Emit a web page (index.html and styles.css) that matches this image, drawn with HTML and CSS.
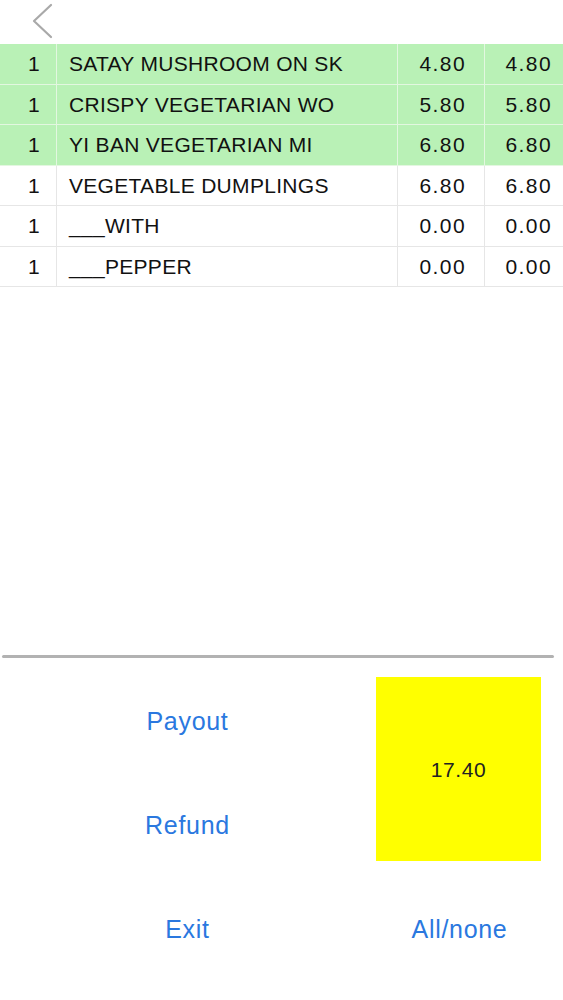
FILE: index.html
```html
<!DOCTYPE html>
<html>
<head>
<meta charset="utf-8">
<link rel="stylesheet" href="styles.css">
</head>
<body>
<div class="page">
  <div class="nav">
    <svg class="back" width="30" height="40" viewBox="0 0 30 40"><path d="M22 5 L5 21 L22 37" fill="none" stroke="#a9a9a9" stroke-width="2.2" stroke-linecap="round" stroke-linejoin="round"/></svg>
  </div>
  <div class="table">
    <div class="row sel"><div class="c qty">1</div><div class="c name">SATAY MUSHROOM ON SK</div><div class="c num price">4.80</div><div class="c num total">4.80</div></div>
    <div class="row sel"><div class="c qty">1</div><div class="c name">CRISPY VEGETARIAN WO</div><div class="c num price">5.80</div><div class="c num total">5.80</div></div>
    <div class="row sel"><div class="c qty">1</div><div class="c name">YI BAN VEGETARIAN MI</div><div class="c num price">6.80</div><div class="c num total">6.80</div></div>
    <div class="row"><div class="c qty">1</div><div class="c name">VEGETABLE DUMPLINGS</div><div class="c num price">6.80</div><div class="c num total">6.80</div></div>
    <div class="row"><div class="c qty">1</div><div class="c name">___WITH</div><div class="c num price">0.00</div><div class="c num total">0.00</div></div>
    <div class="row"><div class="c qty">1</div><div class="c name">___PEPPER</div><div class="c num price">0.00</div><div class="c num total">0.00</div></div>
  </div>
  <div class="spacer"></div>
  <div class="divider"></div>
  <div class="actions">
    <div class="btn payout">Payout</div>
    <div class="totalbox"><span>17.40</span></div>
    <div class="btn refund">Refund</div>
    <div class="btn exit">Exit</div>
    <div class="btn allnone">All/none</div>
  </div>
</div>
</body>
</html>
```
FILE: styles.css
```css
* { box-sizing: border-box; }
html, body { margin: 0; padding: 0; background: #fff; }
body { font-family: "Liberation Sans", Arial, sans-serif; color: #111; }
.page { width: 563px; height: 1000px; display: flex; flex-direction: column; }
.nav { height: 44px; padding-left: 29px; }
.back { display: block; }
.table { display: flex; flex-direction: column; }
.row { display: grid; grid-template-columns: 57px 341px 87px 78px; height: 40.5px; border-bottom: 1px solid #e6e6e6; }
.row.sel { background: #b9f1b6; border-bottom-color: #e3f7e0; }
.c { display: flex; align-items: center; font-size: 21px; letter-spacing: 0.3px; border-right: 1px solid #e6e6e6; padding-top: 1px; }
.row.sel .c { border-right-color: #e3f7e0; }
.c:last-child { border-right: none; }
.qty { justify-content: flex-end; padding-right: 16px; }
.name { padding-left: 12px; white-space: nowrap; overflow: hidden; }
.num { letter-spacing: 1.4px; justify-content: flex-end; }
.price { padding-right: 18px; }
.total { padding-right: 11px; }
.spacer { flex: 1; }
.divider { height: 3px; margin: 0 9px 0 2px; background: #b2b2b2; border-radius: 2px; }
.actions { height: 342px; display: grid; grid-template-columns: 375px 166px; grid-template-rows: 104px 104px 104px; padding-top: 11px; }
.btn { display: flex; align-items: center; justify-content: center; color: #2a78df; font-size: 25px; letter-spacing: 0.7px; }
.payout { grid-column: 1; grid-row: 1; }
.refund { grid-column: 1; grid-row: 2; }
.exit { grid-column: 1; grid-row: 3; }
.allnone { grid-column: 2; grid-row: 3; padding-left: 3px; }
.totalbox { grid-column: 2; grid-row: 1 / span 2; margin: 8px 0 16px 1px; background: #ffff00; display: flex; align-items: center; justify-content: center; font-size: 21px; letter-spacing: 0.6px; color: #222; }
.totalbox span { margin-top: 2px; }
```
